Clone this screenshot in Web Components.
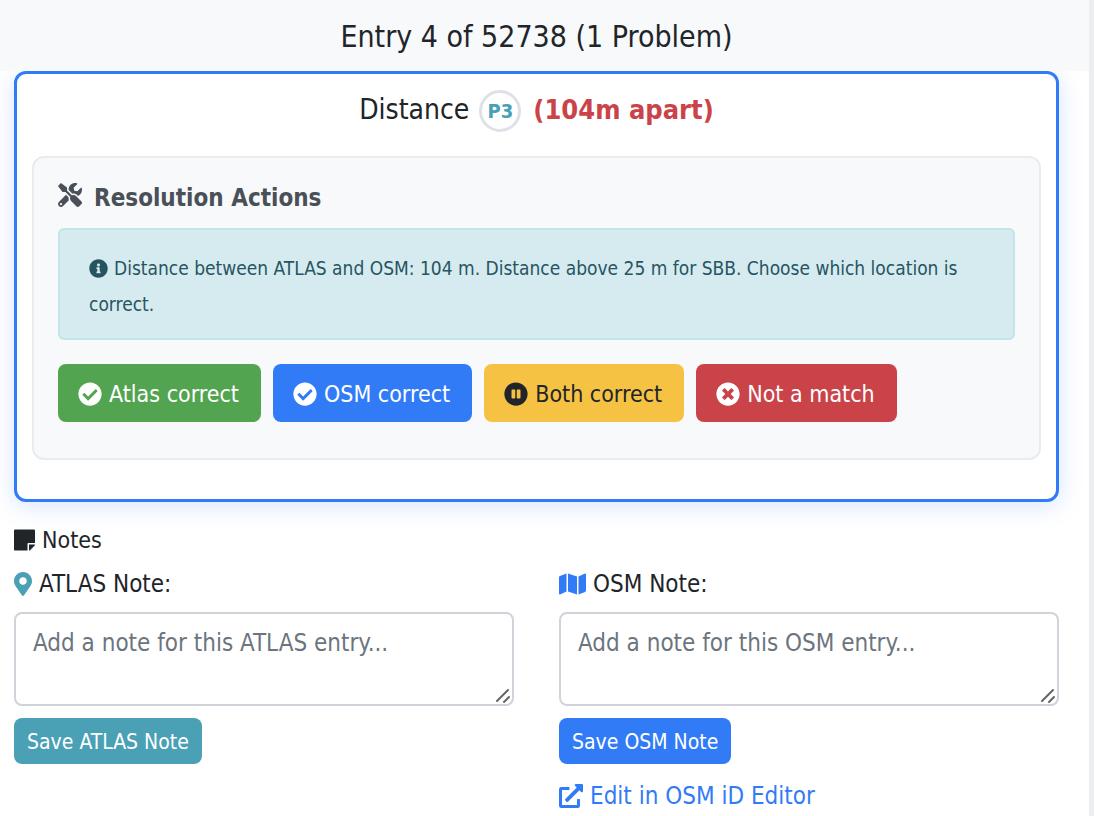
<!DOCTYPE html>
<html lang="en">
<head>
<meta charset="utf-8">
<title>Entry 4 of 52738</title>
<style>
  html {
    --blue: #317bf7; --teal: #4aa0b5; --green: #52a450; --yellow: #f5c244; --red: #ca4349;
    --ink: #212529; --muted: #6c757d; --soft: #f8f9fb; --line: #e9ebee;
  }
  body {
    margin: 0; min-height: 100vh; background: #fff; color: var(--ink);
    font: 24px/36px "DejaVu Sans Condensed", "DejaVu Sans", Tahoma, sans-serif;
    box-sizing: border-box; border-right: 5px solid #edeef0;
  }
</style>
</head>
<body>
<problem-page></problem-page>

<script>
const ICONS = {
  tools: [512, 'M501.1 395.7L384 278.6c-23.1-23.1-57.6-27.6-85.4-13.9L192 158.1V96L64 0 0 64l96 128h62.1l106.6 106.6c-13.6 27.8-9.2 62.3 13.9 85.4l117.1 117.1c14.6 14.6 38.2 14.6 52.7 0l52.7-52.7c14.5-14.6 14.5-38.2 0-52.7zM331.7 225c28.3 0 54.9 11 74.9 31l19.4 19.4c15.8-6.9 30.8-16.5 43.8-29.5 37.1-37.1 49.7-89.3 37.9-136.7-2.2-9-13.5-12.1-20.1-5.5l-74.4 74.4-67.9-11.3L334 98.9l74.4-74.4c6.6-6.6 3.4-17.9-5.7-20.2-47.4-11.7-99.6.9-136.6 37.9-28.5 28.5-41.9 66.1-41.2 103.6l82.1 82.1c8.1-1.9 16.5-2.9 24.7-2.9zm-103.9 82l-56.7-56.7L18.7 402.8c-25 25-25 65.5 0 90.5s65.5 25 90.5 0l123.6-123.6c-7.6-19.9-9.9-41.6-5-62.7zM64 472c-13.2 0-24-10.8-24-24 0-13.3 10.7-24 24-24s24 10.7 24 24c0 13.2-10.7 24-24 24z'],
  info: [512, 'M256 8C119.043 8 8 119.083 8 256c0 136.997 111.043 248 248 248s248-111.003 248-248C504 119.083 392.957 8 256 8zm0 110c23.196 0 42 18.804 42 42s-18.804 42-42 42-42-18.804-42-42 18.804-42 42-42zm56 254c0 6.627-5.373 12-12 12h-88c-6.627 0-12-5.373-12-12v-24c0-6.627 5.373-12 12-12h12v-64h-12c-6.627 0-12-5.373-12-12v-24c0-6.627 5.373-12 12-12h64c6.627 0 12 5.373 12 12v100h12c6.627 0 12 5.373 12 12v24z'],
  check: [512, 'M504 256c0 136.967-111.033 248-248 248S8 392.967 8 256 119.033 8 256 8s248 111.033 248 248zM227.314 387.314l184-184c6.248-6.248 6.248-16.379 0-22.627l-22.627-22.627c-6.248-6.249-16.379-6.249-22.628 0L216 308.118l-70.059-70.059c-6.248-6.248-16.379-6.248-22.628 0l-22.627 22.627c-6.248 6.248-6.248 16.379 0 22.627l104 104c6.249 6.249 16.379 6.249 22.628.001z'],
  pause: [512, 'M256 8C119 8 8 119 8 256s111 248 248 248 248-111 248-248S393 8 256 8zm-16 328c0 8.800-7.200 16-16 16h-48c-8.800 0-16-7.200-16-16V176c0-8.800 7.200-16 16-16h48c8.800 0 16 7.200 16 16v160zm112 0c0 8.800-7.200 16-16 16h-48c-8.800 0-16-7.200-16-16V176c0-8.800 7.200-16 16-16h48c8.800 0 16 7.200 16 16v160z'],
  times: [512, 'M256 8C119 8 8 119 8 256s111 248 248 248 248-111 248-248S393 8 256 8zm121.600 313.100c4.700 4.700 4.700 12.300 0 17L338 377.600c-4.700 4.700-12.300 4.700-17 0L256 312l-65.100 65.600c-4.700 4.700-12.300 4.700-17 0L134.400 338c-4.700-4.700-4.700-12.300 0-17l65.600-65-65.600-65.100c-4.700-4.700-4.700-12.300 0-17l39.600-39.600c4.700-4.700 12.300-4.700 17 0l65 65.700 65.100-65.600c4.700-4.700 12.300-4.700 17 0l39.600 39.600c4.700 4.700 4.700 12.300 0 17L312 256l65.600 65.100z'],
  note: [448, 'M312 320h136V56c0-13.300-10.700-24-24-24H24C10.700 32 0 42.700 0 56v400c0 13.300 10.700 24 24 24h264V344c0-13.200 10.800-24 24-24zm129 55l-98 98c-4.500 4.500-10.600 7-17 7h-6V352h128v6.100c0 6.300-2.500 12.400-7 16.900z'],
  pin: [384, 'M172.268 501.670C26.970 291.031 0 269.413 0 192 0 85.961 85.961 0 192 0s192 85.961 192 192c0 77.413-26.970 99.031-172.268 309.670-9.535 13.774-29.930 13.773-39.464 0zM192 272c44.183 0 80-35.817 80-80s-35.817-80-80-80-80 35.817-80 80 35.817 80 80 80z'],
  map: [576, 'M0 117.660v346.320c0 11.320 11.430 19.060 21.940 14.860L160 416V32L20.120 87.950A32.006 32.006 0 0 0 0 117.660zM192 416l192 64V96L192 32v384zM554.060 33.160L416 96v384l139.880-55.950A31.996 31.996 0 0 0 576 394.340V48.020c0-11.320-11.430-19.060-21.940-14.860z'],
  external: [512, 'M432,320H400a16,16,0,0,0-16,16V448H64V128H208a16,16,0,0,0,16-16V80a16,16,0,0,0-16-16H48A48,48,0,0,0,0,112V464a48,48,0,0,0,48,48H400a48,48,0,0,0,48-48V336A16,16,0,0,0,432,320ZM488,0h-128c-21.370,0-32.050,25.910-17,41l35.730,35.730L135,320.370a24,24,0,0,0,0,34L157.670,377a24,24,0,0,0,34,0L435.280,133.320,471,169c15,15,41,4.500,41-17V24A24,24,0,0,0,488,0Z']
};

function define(name, render) {
  customElements.define(name, class extends HTMLElement {
    connectedCallback() {
      if (this.shadowRoot) return;
      const template = document.createElement('template');
      template.innerHTML = render(this);
      this.attachShadow({ mode: 'open' }).append(template.content.cloneNode(true));
    }
  });
}

define('ui-icon', el => {
  const [w, d] = ICONS[el.getAttribute('name')];
  return `<style>
    :host { display: inline-flex; flex: none; }
    svg { height: var(--icon-size, 24px); fill: currentColor; }
  </style><svg viewBox="0 0 ${w} 512" aria-hidden="true"><path d="${d}"/></svg>`;
});

define('page-header', () => `<style>
    :host { display: block; position: relative; z-index: 1; padding: 17px 30px 14px 14px; background: var(--soft); text-align: center; }
    h1 { margin: 0; font-size: 30px; font-weight: 400; line-height: 40px; }
  </style><h1><slot></slot></h1>`);

define('problem-card', () => `<style>
    :host { display: block; padding: 16px 15px 39px; border: 3px solid var(--blue); border-radius: 12px;
      background: #fff; box-shadow: 0 4px 24px rgba(49, 123, 247, .2); }
    header { display: flex; align-items: center; justify-content: center; height: 42px; margin-bottom: 24px; }
    h2 { margin: 0; font-size: 28px; font-weight: 400; line-height: 36px; padding-bottom: 3px; }
    .badge { box-sizing: border-box; width: 42px; height: 42px; margin: 0 12px 0 10px; border: 3px solid #dee2e6; border-radius: 50%;
      color: var(--teal); font-size: 20px; font-weight: 700; line-height: 36px; text-align: center; }
    .far { color: var(--red); font-size: 27px; padding-bottom: 3px; }
  </style>
  <header><h2><slot name="title"></slot></h2><span class="badge"><slot name="code"></slot></span><strong class="far"><slot name="distance"></slot></strong></header>
  <slot></slot>`);

define('action-panel', () => `<style>
    :host { display: block; padding: 25px 24px 36px; border: 2px solid var(--line); border-radius: 12px; background: var(--soft); }
    h3 { display: flex; align-items: center; gap: 12px; margin: 0 0 15px; color: #495057; font-size: 24px; line-height: 30px; }
    ui-icon { padding-bottom: 6px; }
    .actions { display: flex; flex-wrap: wrap; gap: 12px; margin-top: 24px; }
  </style>
  <h3><ui-icon name="tools"></ui-icon><slot name="title"></slot></h3>
  <slot name="info"></slot>
  <div class="actions"><slot></slot></div>`);

define('info-alert', () => `<style>
    :host { display: block; padding: 20px 29px 16px; border: 2px solid #c3e5ea; border-radius: 6px;
      background: #d6ebf0; color: #265561; font-size: 19px; line-height: 36px; --icon-size: 19px; }
    p { margin: 0; }
    ui-icon { vertical-align: -3px; margin-right: 6px; }
  </style><p><ui-icon name="info"></ui-icon><slot></slot></p>`);

define('action-button', el => `<style>
    :host { display: block; }
    button { display: flex; align-items: center; gap: 7px; height: 58px; padding: 2px 22px 0 20px; border: 0; border-radius: 8px;
      background: var(--${el.getAttribute('tone')}); color: #fff; font: inherit; font-size: 23px; cursor: pointer; }
    button.yellow { color: var(--ink); }
  </style><button type="button" class="${el.getAttribute('tone')}"><ui-icon name="${el.getAttribute('icon')}"></ui-icon><slot></slot></button>`);

define('note-field', el => {
  const name = el.getAttribute('name'), tone = el.getAttribute('tone');
  return `<style>
    :host { display: block; min-width: 0; }
    label { display: flex; align-items: center; gap: 7px; margin-bottom: 10px; }
    ui-icon { color: var(--${tone}); }
    .box { position: relative; display: flex; margin-bottom: 12px; }
    textarea { box-sizing: border-box; width: 100%; height: 94px; margin: 0; padding: 11px 17px; border: 2px solid #ced4da; border-radius: 8px;
      background: #fff; color: var(--ink); font: inherit; resize: vertical; outline: 0; }
    textarea::placeholder { color: var(--muted); opacity: 1; }
    textarea::-webkit-resizer { display: none; }
    .grip { position: absolute; right: 3px; bottom: 2px; width: 16px; height: 16px; pointer-events: none;
      fill: none; stroke: #666; stroke-width: 2; stroke-linecap: round; }
    button { height: 46px; padding: 2px 13px 0; border: 0; border-radius: 8px; background: var(--${tone}); color: #fff;
      font: inherit; font-size: 21px; cursor: pointer; display: block; }
    ::slotted(*) { margin-top: 14px; }
  </style>
  <label for="note"><ui-icon name="${el.getAttribute('icon')}"></ui-icon>${name} Note:</label>
  <div class="box">
    <textarea id="note" placeholder="Add a note for this ${name} entry..."></textarea>
    <svg class="grip" viewBox="0 0 16 16" aria-hidden="true"><path d="M2 13 13 2M9 14l5-5"/></svg>
  </div>
  <button type="button">Save ${name} Note</button>
  <slot></slot>`;
});

define('editor-link', () => `<style>
    :host { display: block; }
    a { display: inline-flex; align-items: center; gap: 7px; color: var(--blue); text-decoration: none; }
  </style><a href="#editor"><ui-icon name="external"></ui-icon><slot></slot></a>`);

define('notes-section', () => `<style>
    :host { display: block; margin-top: 20px; }
    h4 { display: flex; align-items: center; gap: 7px; margin: 0 0 8px; font-size: 23px; font-weight: 400; line-height: 36px; }
    .grid { display: grid; grid-template-columns: 1fr 1fr; gap: 45px; }
  </style>
  <h4><ui-icon name="note"></ui-icon>Notes</h4>
  <div class="grid"><slot></slot></div>`);

define('problem-page', () => `<style>
    :host { display: block; }
    main { padding: 0 30px 0 14px; }
  </style>
  <page-header>Entry 4 of 52738 (1 Problem)</page-header>
  <main>
    <problem-card>
      <span slot="title">Distance</span><span slot="code">P3</span><span slot="distance">(104m apart)</span>
      <action-panel>
        <span slot="title">Resolution Actions</span>
        <info-alert slot="info">Distance between ATLAS and OSM: 104 m. Distance above 25 m for SBB. Choose which location is correct.</info-alert>
        <action-button tone="green" icon="check">Atlas correct</action-button>
        <action-button tone="blue" icon="check">OSM correct</action-button>
        <action-button tone="yellow" icon="pause">Both correct</action-button>
        <action-button tone="red" icon="times">Not a match</action-button>
      </action-panel>
    </problem-card>
    <notes-section>
      <note-field name="ATLAS" tone="teal" icon="pin"></note-field>
      <note-field name="OSM" tone="blue" icon="map"><editor-link>Edit in OSM iD Editor</editor-link></note-field>
    </notes-section>
  </main>`);
</script>
</body>
</html>
